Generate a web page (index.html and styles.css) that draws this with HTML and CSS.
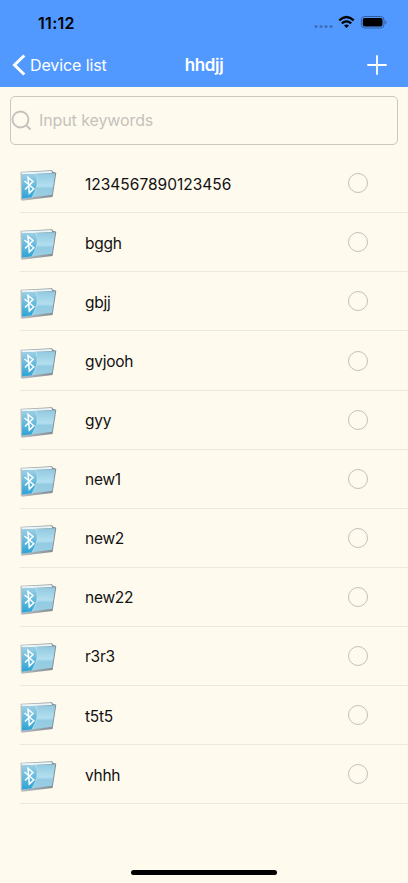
FILE: index.html
```html
<!DOCTYPE html>
<html lang="en">
<head>
  <meta charset="UTF-8">
  <meta name="viewport" content="width=device-width, initial-scale=1.0">
  <title>hhdjj</title>
  <link rel="stylesheet" href="styles.css">
</head>
<body>
  <svg class="defs" width="0" height="0">
    <defs>
      <linearGradient id="cover" x1="0" y1="0" x2="0" y2="1">
        <stop offset="0" stop-color="#92c9e0"/>
        <stop offset="0.5" stop-color="#b2dfef"/>
        <stop offset="0.6" stop-color="#93cbe2"/>
        <stop offset="1" stop-color="#9bd0e5"/>
      </linearGradient>
      <linearGradient id="spine" x1="0" y1="0" x2="0" y2="1">
        <stop offset="0" stop-color="#9ccfe4"/>
        <stop offset="1" stop-color="#2ba3d5"/>
      </linearGradient>
      <linearGradient id="edge" x1="0" y1="0" x2="1" y2="0">
        <stop offset="0" stop-color="#b9c0c4"/>
        <stop offset="1" stop-color="#7d888f"/>
      </linearGradient>
    </defs>
    <symbol id="folder" viewBox="0 0 50 50">
      <path d="M6.500 11.800 L38 10.300 L39 11.800 L42.300 12.800 L38.600 37 L8 40.800 L6.800 39.500Z" fill="url(#edge)"/>
      <path d="M7.500 12.600 L37.500 11 L38 13 L8 14.500Z" fill="#e9f5f8"/>
      <path d="M8 14.500 L41.300 13.300 L38 34.800 L8 38.600Z" fill="url(#cover)"/>
      <path d="M8 14.500 L22 14 Q26 25 18 37.300 L8 38.600Z" fill="url(#spine)"/>
      <path d="M22 14 Q26 25 18 37.300" fill="none" stroke="#c9e8f2" stroke-width="0.6"/>
      <path d="M10.500 21 L19.800 28.700 L15.300 33 L14 17.500 L19 21.500 L11 29.500" fill="none" stroke="#fff" stroke-width="1.500"/>
    </symbol>
  </svg>

  <header class="header">
    <div class="status">
      <span class="time">11:12</span>
      <svg class="status-icons" width="76" height="16" viewBox="0 0 76 16">
        <g fill="#3d6fbc">
          <circle cx="3" cy="11.500" r="1.600"/>
          <circle cx="8" cy="11.500" r="1.600"/>
          <circle cx="13" cy="11.500" r="1.600"/>
          <circle cx="18" cy="11.500" r="1.600"/>
        </g>
        <g fill="none" stroke="#000" stroke-width="2.300">
          <path d="M26.300 5.300 Q33.500 -1.200 40.700 5.300"/>
          <path d="M28.800 8.400 Q33.500 4.300 38.200 8.400"/>
        </g>
        <path d="M31 10.500 Q33.500 8.400 36 10.500 L33.500 13Z"/>
        <rect x="48.300" y="1.500" width="22.700" height="11.500" rx="3.500" fill="none" stroke="#315c9e"/>
        <rect x="49.800" y="3" width="19.700" height="8.500" rx="2"/>
        <path d="M72.300 5.300 Q74.700 7.200 72.300 9.300Z" fill="#315c9e"/>
      </svg>
    </div>
    <nav class="navbar">
      <a class="back">
        <svg width="14" height="22" viewBox="0 0 14 22"><path d="M12.300 1.500 L2.500 11 L12.300 20.500" fill="none" stroke="#fff" stroke-width="3"/></svg>
        <span>Device list</span>
      </a>
      <h1 class="title">hhdjj</h1>
      <svg class="add" width="20" height="20" viewBox="0 0 20 20"><path d="M10 0.300 V19.700 M0.300 10 H19.700" stroke="#fff" stroke-width="1.800"/></svg>
    </nav>
  </header>

  <div class="search">
    <svg width="21" height="21" viewBox="0 0 21 21"><path d="M15.600 15.600 L19.500 19.500" stroke="#c4c1bc" stroke-width="2"/><circle cx="9.500" cy="9.500" r="8" fill="none" stroke="#c4c1bc" stroke-width="1.800"/></svg>
    <input type="text" placeholder="Input keywords">
  </div>

  <ul class="list">
    <li class="row"><svg class="folder"><use href="#folder"/></svg><span class="name digits">1234567890123456</span><span class="radio"></span></li>
    <li class="row"><svg class="folder"><use href="#folder"/></svg><span class="name">bggh</span><span class="radio"></span></li>
    <li class="row"><svg class="folder"><use href="#folder"/></svg><span class="name">gbjj</span><span class="radio"></span></li>
    <li class="row"><svg class="folder"><use href="#folder"/></svg><span class="name">gvjooh</span><span class="radio"></span></li>
    <li class="row"><svg class="folder"><use href="#folder"/></svg><span class="name">gyy</span><span class="radio"></span></li>
    <li class="row"><svg class="folder"><use href="#folder"/></svg><span class="name">new1</span><span class="radio"></span></li>
    <li class="row"><svg class="folder"><use href="#folder"/></svg><span class="name">new2</span><span class="radio"></span></li>
    <li class="row"><svg class="folder"><use href="#folder"/></svg><span class="name">new22</span><span class="radio"></span></li>
    <li class="row"><svg class="folder"><use href="#folder"/></svg><span class="name">r3r3</span><span class="radio"></span></li>
    <li class="row"><svg class="folder"><use href="#folder"/></svg><span class="name">t5t5</span><span class="radio"></span></li>
    <li class="row"><svg class="folder"><use href="#folder"/></svg><span class="name">vhhh</span><span class="radio"></span></li>
  </ul>

  <div class="home-bar"></div>
</body>
</html>
```

FILE: styles.css
```css
* {
  box-sizing: border-box;
}

body {
  margin: 0;
  height: 883px;
  display: flex;
  flex-direction: column;
  font-family: Inter, "Liberation Sans", sans-serif;
  font-size: 16px;
  color: #111;
  background-color: #fffaee;
  overflow: hidden;
}

svg {
  display: block;
  flex: none;
}

.defs {
  position: absolute;
}

.header {
  height: 87px;
  flex: none;
  background-color: #5199ff;
}

.status {
  height: 46px;
  padding: 0 19px 0 38px;
  display: flex;
  justify-content: space-between;
  align-items: center;
}

.time {
  font-weight: 600;
  letter-spacing: 0.3px;
  color: #000;
}

.navbar {
  height: 38px;
  padding: 0 21px;
  display: grid;
  grid-template-columns: 1fr auto 1fr;
  align-items: center;
  color: #fff;
}

.back {
  margin-left: -9px;
  display: flex;
  align-items: center;
  gap: 4px;
  letter-spacing: -0.1px;
}

.title {
  margin: 0;
  font-size: 17px;
  font-weight: 600;
  letter-spacing: -0.35px;
}

.add {
  justify-self: end;
}

.search {
  height: 49px;
  margin: 9px 10px 0;
  flex: none;
  display: flex;
  align-items: center;
  gap: 7px;
  border: 1px solid #cbc8c0;
  border-radius: 5px;
}

.search input {
  flex: 1;
  padding: 0 0 2px;
  border: none;
  outline: none;
  background: transparent;
  font: inherit;
  letter-spacing: -0.1px;
}

.search input::placeholder {
  color: #c5c2bd;
  opacity: 1;
}

.list {
  margin: 9px 0 0;
  padding: 0.2px 0 0 20px;
  list-style: none;
}

.row {
  height: 59.1px;
  padding-right: 40px;
  display: flex;
  align-items: center;
  border-bottom: 1px solid #ece8df;
}

.folder {
  width: 50px;
  height: 50px;
  margin: 4px 21px 0 -6px;
}

.name {
  flex: 1;
  padding-top: 2px;
  font-size: 15.5px;
  letter-spacing: -0.25px;
}

.digits {
  letter-spacing: 0;
}

.radio {
  width: 20px;
  height: 20px;
  border: 1.3px solid #c4c1bc;
  border-radius: 50%;
}

.home-bar {
  width: 146px;
  height: 5px;
  margin: auto auto 8px;
  flex: none;
  border-radius: 3px;
  background-color: #000;
}
```
